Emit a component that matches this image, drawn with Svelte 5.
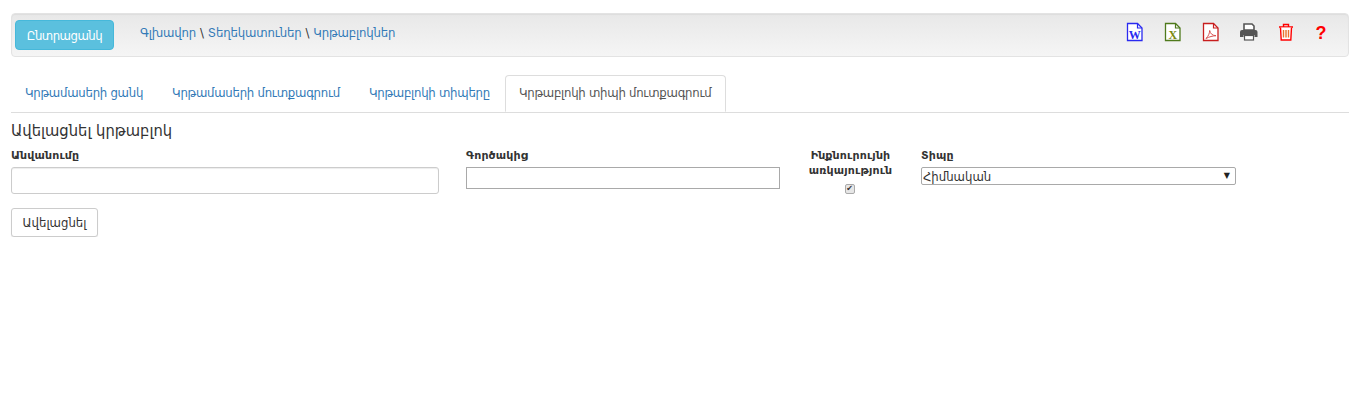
<script lang="ts">
	const crumbs = ['Գլխավոր', 'Տեղեկատուներ', 'Կրթաբլոկներ'];
	const tabs = ['Կրթամասերի ցանկ', 'Կրթամասերի մուտքագրում', 'Կրթաբլոկի տիպերը', 'Կրթաբլոկի տիպի մուտքագրում'];
	let activeTab = $state(3);
</script>

<div class="page">
	<div class="toolbar">
		<button class="btn-list">Ընտրացանկ</button>
		<div class="crumbs">
			{#each crumbs as crumb, i}
				{#if i > 0}<span class="sep">\</span>{/if}
				<a href="#top">{crumb}</a>
			{/each}
		</div>
		<div class="icons">
			<svg width="18" height="20" viewBox="0 0 18 20" fill="none">
				<path d="M1.500 1.500h10l4.500 4.500v12.500h-14.500z" stroke="#2a2af0" stroke-width="1.300" fill="#fff" />
				<path d="M11.500 1.500v4.500h4.500" stroke="#2a2af0" stroke-width="1.200" />
				<text x="8.800" y="16.500" text-anchor="middle" class="doc-letter" fill="#2a2af0">W</text>
			</svg>
			<svg width="18" height="20" viewBox="0 0 18 20" fill="none">
				<path d="M1.500 1.500h10l4.500 4.500v12.500h-14.500z" stroke="#4f7a1c" stroke-width="1.300" fill="#fff" />
				<path d="M11.500 1.500v4.500h4.500" stroke="#4f7a1c" stroke-width="1.200" />
				<text x="8.800" y="16.500" text-anchor="middle" class="doc-letter" fill="#7a8a10">X</text>
			</svg>
			<svg width="18" height="20" viewBox="0 0 18 20" fill="none">
				<path d="M1.500 1.500h10l4.500 4.500v12.500h-14.500z" stroke="#c81e1e" stroke-width="1.300" fill="#fff" />
				<path d="M11.500 1.500v4.500h4.500" stroke="#c81e1e" stroke-width="1.200" />
				<path d="M4 16.500c2.500-2.500 3.500-5 3.700-8 .5 3 2.500 5 6.300 5.200-3.500.2-6.500 1-10 2.800z" stroke="#d85050" stroke-width="1" />
			</svg>
			<svg width="18" height="18" viewBox="0 0 18 18">
				<path d="M4 1h8l2 2v4h-10z" fill="#fff" stroke="#555" stroke-width="1.600" />
				<path d="M2.500 7h13a2 2 0 0 1 2 2v5h-3v-2h-11v2h-3.500v-5a2 2 0 0 1 2-2z" fill="#555" />
				<rect x="4.500" y="12.500" width="9" height="4.500" fill="#fff" stroke="#555" stroke-width="1.200" />
			</svg>
			<svg width="16" height="18" viewBox="0 0 16 18" fill="none">
				<path d="M1 4h14M5.500 4v-2.500h5v2.500" stroke="#f00" stroke-width="1.400" />
				<path d="M2.500 4.500l.7 12.500h9.600l.7-12.500" stroke="#f00" stroke-width="1.400" fill="#fff" />
				<path d="M5.500 7v7.500M8 7v7.500M10.500 7v7.500" stroke="#e8742c" stroke-width="1.400" />
			</svg>
			<span class="help">?</span>
		</div>
	</div>

	<ul class="tabs">
		{#each tabs as tab, i}
			<li class:active={i === activeTab}><a href="#top">{tab}</a></li>
		{/each}
	</ul>

	<h4>Ավելացնել կրթաբլոկ</h4>

	<div class="form-row">
		<div class="field">
			<label for="name">Անվանումը</label>
			<input id="name" class="control" type="text" />
		</div>
		<div class="field">
			<label for="coef">Գործակից</label>
			<input id="coef" class="plain" type="text" />
		</div>
		<div class="field center">
			<label for="indep">Ինքնուրույնի առկայություն</label>
			<input id="indep" class="check" type="checkbox" checked disabled />
		</div>
		<div class="field">
			<label for="type">Տիպը</label>
			<div class="select-wrap">
				<select id="type">
					<option>Հիմնական</option>
				</select>
			</div>
		</div>
	</div>

	<button class="btn-add">Ավելացնել</button>
</div>

<style>
	:global(body) {
		margin: 0;
		background: #fff;
	}

	.page {
		padding: 13px 9px 0 11px;
		font-family: "DejaVu Sans Condensed", "DejaVu Sans", sans-serif;
		font-stretch: condensed;
		font-size: 13px;
		color: #333;
	}

	.toolbar {
		display: flex;
		align-items: center;
		height: 44px;
		box-sizing: border-box;
		padding: 0 20px 0 3px;
		background: linear-gradient(#e8e8e8, #f5f5f5);
		border: 1px solid #e3e3e3;
		border-radius: 4px;
		box-shadow: inset 0 1px 1px rgba(0, 0, 0, 0.05);
	}

	.btn-list {
		width: 99px;
		height: 30px;
		padding: 0;
		background: #5bc0de;
		border: 1px solid #46b8da;
		border-radius: 4px;
		color: #fff;
		font: inherit;
		letter-spacing: -0.5px;
	}

	.crumbs {
		display: flex;
		gap: 4px;
		margin-left: 26px;
		margin-top: -5px;
		letter-spacing: -0.15px;
	}

	.crumbs a,
	.tabs a {
		color: #337ab7;
		text-decoration: none;
	}

	.sep {
		color: #333;
	}

	.icons {
		display: flex;
		align-items: center;
		gap: 20px;
		margin-left: auto;
		margin-top: -7px;
	}

	.doc-letter {
		font: bold 12px "Liberation Serif", serif;
	}

	.help {
		width: 14px;
		font: bold 18px "Liberation Sans", sans-serif;
		color: #f00;
		text-align: center;
		margin-top: 3px;
	}

	.tabs {
		display: flex;
		list-style: none;
		margin: 18px 0 0;
		padding: 0;
		height: 37px;
		border-bottom: 1px solid #ddd;
		letter-spacing: -0.25px;
	}

	.tabs li a {
		display: block;
		height: 36px;
		box-sizing: border-box;
		padding: 9px 14px 10px 13px;
		border: 1px solid transparent;
		border-radius: 4px 4px 0 0;
		line-height: 15px;
	}

	.tabs li.active a {
		height: 37px;
		background: #fff;
		border-color: #ddd #ddd #fff;
		color: #555;
	}

	h4 {
		margin: 9px 0 0;
		font-size: 16.4px;
		font-weight: 400;
		line-height: 18px;
	}

	.form-row {
		display: grid;
		grid-template-columns: 428px 314px 87px 315px;
		column-gap: 27px;
		margin-top: 8px;
	}

	.field {
		display: flex;
		flex-direction: column;
		align-items: stretch;
	}

	.center {
		align-items: center;
		text-align: center;
	}

	label {
		margin-bottom: 4px;
		font-family: "DejaVu Sans", sans-serif;
		font-stretch: normal;
		font-size: 11px;
		font-weight: bold;
		line-height: 15px;
		letter-spacing: 0.15px;
	}

	.control {
		height: 27px;
		box-sizing: border-box;
		border: 1px solid #ccc;
		border-radius: 3px;
		box-shadow: inset 0 1px 1px rgba(0, 0, 0, 0.075);
	}

	.plain {
		height: 22px;
		box-sizing: border-box;
		border: 1px solid #a9a9a9;
		border-radius: 0;
	}

	.check {
		appearance: none;
		display: flex;
		align-items: center;
		justify-content: center;
		width: 10px;
		height: 10px;
		margin: 2px 2px 0 0;
		background: #e6e6e6;
		border: 1px solid #aaa;
		border-radius: 2px;
	}

	.check::before {
		content: "✔";
		font: 8px/8px "DejaVu Sans", sans-serif;
		color: #333;
	}

	.select-wrap {
		position: relative;
	}

	.select-wrap::after {
		content: "▼";
		position: absolute;
		top: 5px;
		right: 6px;
		font: 8px/8px "DejaVu Sans", sans-serif;
		color: #222;
		pointer-events: none;
	}

	select {
		appearance: none;
		display: block;
		width: 100%;
		height: 18px;
		box-sizing: border-box;
		padding: 0 0 0 1px;
		font: inherit;
		font-stretch: condensed;
		color: #333;
		background: #fff;
		border: 1px solid #a9a9a9;
		border-radius: 2px;
	}

	.btn-add {
		display: block;
		width: 87px;
		height: 29px;
		margin-top: 14px;
		padding: 0;
		background: #fff;
		border: 1px solid #ccc;
		border-radius: 3px;
		box-shadow: 0 1px 1px rgba(0, 0, 0, 0.08);
		color: #333;
		font: inherit;
	}
</style>
